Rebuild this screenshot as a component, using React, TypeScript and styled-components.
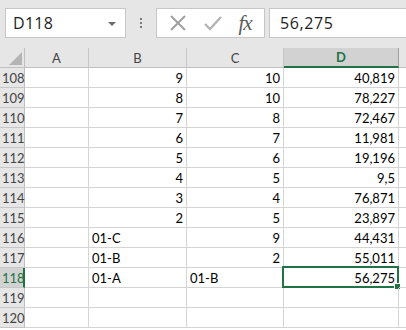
import React from 'react'
import styled, { createGlobalStyle } from 'styled-components'

const GlobalStyle = createGlobalStyle`
  html, body {
    margin: 0;
    padding: 0;
    background: #ffffff;
    overflow: hidden;
  }
`

const GREEN = '#217346'
const COLS = '25px 64px 98px 97px 115px 60px'

const Sheet = styled.div`
  width: 406px;
  height: 330px;
  overflow: hidden;
  font-family: Lato, 'Liberation Sans', sans-serif;
  background: #ffffff;
`

const FormulaBar = styled.div`
  display: flex;
  align-items: flex-start;
  height: 48px;
  box-sizing: border-box;
  padding: 8px 0 0 5px;
  background: #e6e6e6;
`

const NameBox = styled.div`
  width: 121px;
  height: 30px;
  box-sizing: border-box;
  display: flex;
  align-items: center;
  justify-content: space-between;
  padding: 0 9px 0 7px;
  background: #ffffff;
  border: 1px solid #c6c6c6;
  font-family: 'Open Sans', sans-serif;
  font-size: 16px;
  letter-spacing: 0.3px;
  color: #1e1e1e;
`

const DropArrow = styled.span`
  width: 0;
  height: 0;
  border-left: 4px solid transparent;
  border-right: 4px solid transparent;
  border-top: 4px solid #6a6a6a;
  margin-top: 2px;
`

const Grip = styled.div`
  width: 30px;
  height: 30px;
  display: flex;
  flex-direction: column;
  align-items: center;
  justify-content: center;
  gap: 2px;

  span {
    width: 2px;
    height: 2px;
    background: #7a7a7a;
  }
`

const ButtonBox = styled.div`
  width: 109px;
  height: 30px;
  box-sizing: border-box;
  display: flex;
  align-items: center;
  justify-content: space-around;
  padding: 0 4px;
  background: #ffffff;
  border: 1px solid #c6c6c6;
`

const Fx = styled.span`
  font-family: 'Liberation Serif', serif;
  font-style: italic;
  font-size: 21px;
  color: #5a5a5a;
  letter-spacing: -1px;
`

const FormulaInput = styled.div`
  flex: 1;
  height: 30px;
  margin-left: 4px;
  margin-right: -4px;
  box-sizing: border-box;
  display: flex;
  align-items: center;
  padding-left: 10px;
  background: #ffffff;
  border: 1px solid #c6c6c6;
  font-family: 'Open Sans', sans-serif;
  font-size: 16px;
  letter-spacing: 0.6px;
  color: #1e1e1e;
`

const Row = styled.div`
  display: grid;
  grid-template-columns: ${COLS};
  height: 20px;
`

const Corner = styled.div`
  position: relative;
  background: #e6e6e6;
  border-right: 1px solid #c0c0c0;
  border-bottom: 1px solid #c0c0c0;
  box-sizing: border-box;

  &::after {
    content: '';
    position: absolute;
    right: 2px;
    bottom: 2px;
    width: 0;
    height: 0;
    border-left: 13px solid transparent;
    border-bottom: 13px solid #b4b4b4;
  }
`

const ColHeader = styled.div<{ $active?: boolean }>`
  box-sizing: border-box;
  display: flex;
  align-items: flex-end;
  justify-content: center;
  padding-bottom: 1px;
  font-size: 13px;
  color: ${(p) => (p.$active ? GREEN : '#444444')};
  font-weight: ${(p) => (p.$active ? 700 : 400)};
  background: ${(p) => (p.$active ? '#d2d2d2' : '#e6e6e6')};
  border-right: 1px solid ${(p) => (p.$active ? '#9f9f9f' : '#c6c6c6')};
  border-bottom: ${(p) => (p.$active ? `2px solid ${GREEN}` : '1px solid #c0c0c0')};
`

const RowHeader = styled.div<{ $active?: boolean }>`
  box-sizing: border-box;
  display: flex;
  align-items: flex-end;
  padding: 0 0 1px 2px;
  font-size: 13px;
  color: ${(p) => (p.$active ? GREEN : '#444444')};
  background: ${(p) => (p.$active ? '#d2d2d2' : '#e6e6e6')};
  border-bottom: 1px solid #c6c6c6;
  border-right: ${(p) => (p.$active ? `2px solid ${GREEN}` : '1px solid #c0c0c0')};
`

const Cell = styled.div<{ $align?: 'left' | 'right' }>`
  position: relative;
  box-sizing: border-box;
  display: flex;
  align-items: flex-end;
  justify-content: ${(p) => (p.$align === 'right' ? 'flex-end' : 'flex-start')};
  padding: 0 3px 1px 3px;
  font-size: 13px;
  color: #000000;
  border-right: 1px solid #d4d4d4;
  border-bottom: 1px solid #d4d4d4;
  white-space: nowrap;
`

const Selection = styled.div`
  position: absolute;
  left: -2px;
  top: -2px;
  right: -1px;
  bottom: -1px;
  border: 2px solid ${GREEN};
  pointer-events: none;
`

const Handle = styled.div`
  position: absolute;
  right: -4px;
  bottom: -4px;
  width: 5px;
  height: 5px;
  background: ${GREEN};
  border: 1px solid #ffffff;
`

type CellVal = string | number | undefined

const rows: { n: number; a?: CellVal; b?: CellVal; c?: CellVal; d?: CellVal }[] = [
  { n: 108, b: 9, c: 10, d: '40,819' },
  { n: 109, b: 8, c: 10, d: '78,227' },
  { n: 110, b: 7, c: 8, d: '72,467' },
  { n: 111, b: 6, c: 7, d: '11,981' },
  { n: 112, b: 5, c: 6, d: '19,196' },
  { n: 113, b: 4, c: 5, d: '9,5' },
  { n: 114, b: 3, c: 4, d: '76,871' },
  { n: 115, b: 2, c: 5, d: '23,897' },
  { n: 116, b: '01-C', c: 9, d: '44,431' },
  { n: 117, b: '01-B', c: 2, d: '55,011' },
  { n: 118, b: '01-A', c: '01-B', d: '56,275' },
  { n: 119 },
  { n: 120 },
]

const alignOf = (v: CellVal) =>
  typeof v === 'number' || (typeof v === 'string' && /^[\d,]+$/.test(v)) ? 'right' : 'left'

const XIcon = () => (
  <svg width="18" height="18" viewBox="0 0 18 18">
    <path d="M2 2 L16 16 M16 2 L2 16" stroke="#a0a0a0" strokeWidth="2" fill="none" />
  </svg>
)

const CheckIcon = () => (
  <svg width="18" height="16" viewBox="0 0 18 16">
    <path d="M1 9 L6 14 L17 2" stroke="#b4b4b4" strokeWidth="2.4" fill="none" />
  </svg>
)

export default function App() {
  return (
    <Sheet>
      <GlobalStyle />
      <FormulaBar>
        <NameBox>
          <span>D118</span>
          <DropArrow />
        </NameBox>
        <Grip>
          <span />
          <span />
          <span />
        </Grip>
        <ButtonBox>
          <XIcon />
          <CheckIcon />
          <Fx>fx</Fx>
        </ButtonBox>
        <FormulaInput>56,275</FormulaInput>
      </FormulaBar>
      <Row>
        <Corner />
        <ColHeader>A</ColHeader>
        <ColHeader>B</ColHeader>
        <ColHeader>C</ColHeader>
        <ColHeader $active>D</ColHeader>
        <ColHeader />
      </Row>
      {rows.map((r) => (
        <Row key={r.n}>
          <RowHeader $active={r.n === 118}>{r.n}</RowHeader>
          <Cell $align={alignOf(r.a)}>{r.a}</Cell>
          <Cell $align={alignOf(r.b)}>{r.b}</Cell>
          <Cell $align={alignOf(r.c)}>{r.c}</Cell>
          <Cell $align={alignOf(r.d)}>
            {r.d}
            {r.n === 118 && (
              <Selection>
                <Handle />
              </Selection>
            )}
          </Cell>
          <Cell />
        </Row>
      ))}
    </Sheet>
  )
}
